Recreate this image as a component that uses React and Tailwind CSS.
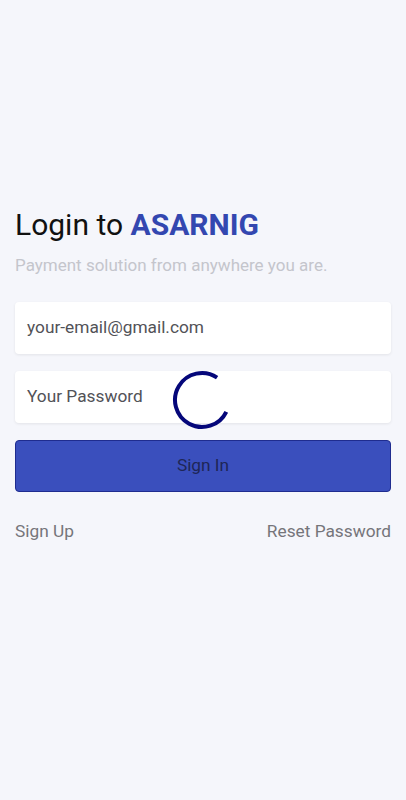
export default function App() {
    return (
        <div className="min-h-[800px] w-full bg-[#f5f6fb] px-[15px] font-['Roboto',sans-serif]">
            <div className="pt-[205px]">
                <h1 className="text-[30px] leading-[40px] text-[#111111]">
                    Login to <span className="font-bold text-[#3347b0]">ASARNIG</span>
                </h1>
                <p className="mt-[8px] text-[17px] leading-[24px] text-[#c4c5cc]">
                    Payment solution from anywhere you are.
                </p>

                <div className="relative mt-[25px] flex flex-col gap-[17px]">
                    <div className="flex h-[52px] items-center rounded-[4px] bg-white px-[12px] text-[17.3px] text-[#525257] shadow-[0_1px_3px_rgba(0,0,0,0.08)]">
                        your-email@gmail.com
                    </div>
                    <div className="flex h-[52px] items-center rounded-[4px] bg-white px-[12px] text-[17.3px] text-[#525257] shadow-[0_1px_3px_rgba(0,0,0,0.08)]">
                        Your Password
                    </div>
                    <button className="flex h-[52px] items-center justify-center rounded-[4px] border border-[#1f2c8f] bg-[#3a4fbd] text-[17.3px] text-[#1e2656]">
                        Sign In
                    </button>

                    {/* loading spinner */}
                    <svg
                        className="absolute left-[156px] top-[67px] h-[62px] w-[62px]"
                        viewBox="0 0 62 62"
                        fill="none"
                    >
                        <path
                            d="M46.1 8.6 A27 27 0 1 0 55.3 42.8"
                            stroke="#05077a"
                            strokeWidth="4"
                        />
                    </svg>
                </div>

                <div className="mt-[27px] flex items-center justify-between text-[17.3px] text-[#75757a]">
                    <span>Sign Up</span>
                    <span>Reset Password</span>
                </div>
            </div>
        </div>
    );
}
